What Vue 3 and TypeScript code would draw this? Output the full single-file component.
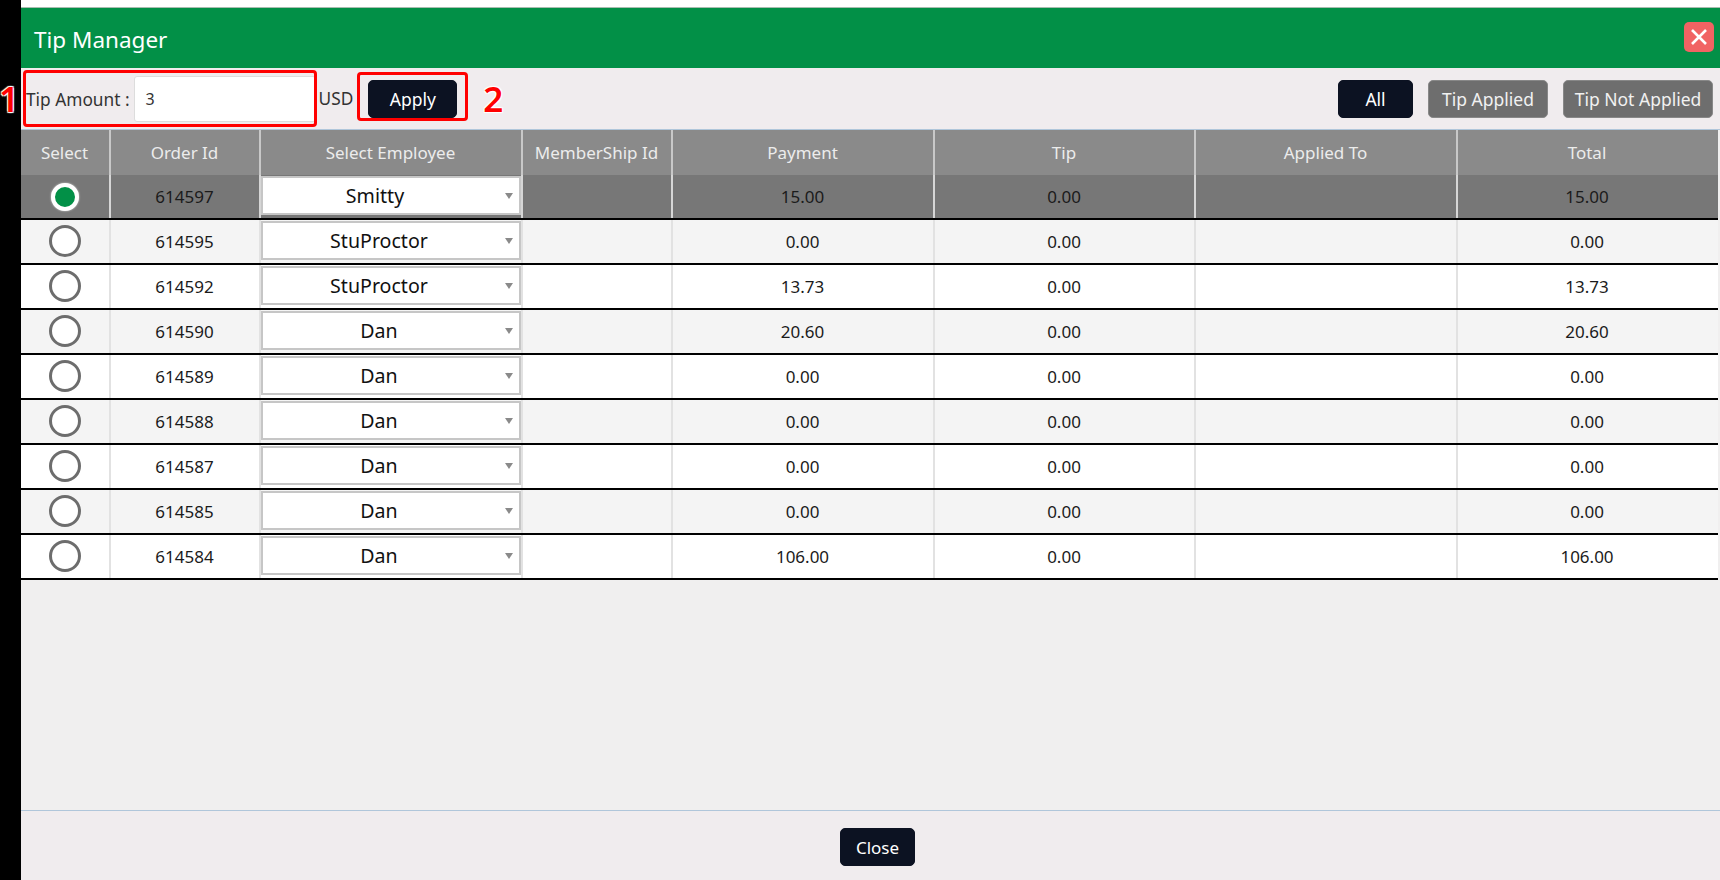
<script setup lang="ts">
interface Row { id: string; emp: string; payment: string; tip: string; total: string }
const rows: Row[] = [
  { id: '614597', emp: 'Smitty', payment: '15.00', tip: '0.00', total: '15.00' },
  { id: '614595', emp: 'StuProctor', payment: '0.00', tip: '0.00', total: '0.00' },
  { id: '614592', emp: 'StuProctor', payment: '13.73', tip: '0.00', total: '13.73' },
  { id: '614590', emp: 'Dan', payment: '20.60', tip: '0.00', total: '20.60' },
  { id: '614589', emp: 'Dan', payment: '0.00', tip: '0.00', total: '0.00' },
  { id: '614588', emp: 'Dan', payment: '0.00', tip: '0.00', total: '0.00' },
  { id: '614587', emp: 'Dan', payment: '0.00', tip: '0.00', total: '0.00' },
  { id: '614585', emp: 'Dan', payment: '0.00', tip: '0.00', total: '0.00' },
  { id: '614584', emp: 'Dan', payment: '106.00', tip: '0.00', total: '106.00' }
]
const heads = ['Select', 'Order Id', 'Select Employee', 'MemberShip Id', 'Payment', 'Tip', 'Applied To', 'Total']
</script>

<template>
  <div class="page">
    <div class="strip"></div>
    <div class="dialog">
      <div class="topgap"></div>
      <header class="title">
        <span>Tip Manager</span>
        <button class="x" aria-label="Close">
          <svg width="18" height="18" viewBox="0 0 18 18"><path d="M2 2L16 16M16 2L2 16" stroke="#fff" stroke-width="2.6" /></svg>
        </button>
      </header>
      <div class="toolbar">
        <div class="amount">
          <label>Tip Amount :</label>
          <div class="input">3</div>
          <i class="mark mark1"></i>
          <b class="num num1">1</b>
        </div>
        <span class="usd">USD</span>
        <div class="applywrap">
          <button class="btn dark">Apply</button>
          <i class="mark mark2"></i>
          <b class="num num2">2</b>
        </div>
        <div class="filters">
          <button class="btn dark all">All</button>
          <button class="btn grey applied">Tip Applied</button>
          <button class="btn grey notapplied">Tip Not Applied</button>
        </div>
      </div>
      <div class="table">
        <div class="tr head">
          <div v-for="h in heads" :key="h" class="td">{{ h }}</div>
        </div>
        <div v-for="(r, i) in rows" :key="r.id" class="tr body" :class="{ sel: i === 0, odd: i % 2 === 1 }">
          <div class="td"><span class="radio" :class="{ on: i === 0 }"></span></div>
          <div class="td">{{ r.id }}</div>
          <div class="td emp">
            <div class="select"><span>{{ r.emp }}</span><i class="caret"></i></div>
          </div>
          <div class="td"></div>
          <div class="td">{{ r.payment }}</div>
          <div class="td">{{ r.tip }}</div>
          <div class="td"></div>
          <div class="td">{{ r.total }}</div>
        </div>
      </div>
      <div class="spacer"></div>
      <footer class="foot"><button class="btn dark">Close</button></footer>
    </div>
  </div>
</template>

<style>
html, body { margin: 0; background: #fff; }
</style>

<style scoped>
.page {
  display: flex;
  width: 1720px;
  height: 880px;
  overflow: hidden;
  font-family: "Noto Sans", "Open Sans", sans-serif;
  color: #1b1b1b;
}
.strip { width: 21px; background: #000; flex: none; }
.dialog { flex: 1; display: flex; flex-direction: column; min-width: 0; background: #f0efef; }
.topgap { height: 7px; background: #fff; border-bottom: 1px solid #a9bdb0; flex: none; }
.title {
  height: 60px;
  flex: none;
  background: #029047;
  color: #fff;
  font-size: 22.5px;
  display: flex;
  align-items: center;
  justify-content: space-between;
  padding: 0 6px 0 13px;
}
.title span { padding-top: 2px; }
.x {
  width: 30px;
  height: 30px;
  margin-top: -2px;
  padding: 0;
  border: 0;
  border-radius: 5px;
  background: #f16363;
  display: flex;
  align-items: center;
  justify-content: center;
}
.toolbar {
  height: 61px;
  flex: none;
  background: #f0ecee;
  border-bottom: 1px solid #b0c6da;
  display: flex;
  align-items: center;
  padding: 0 7px 0 0;
  font-size: 17.3px;
}
.amount { position: relative; display: flex; align-items: center; padding-left: 5px; }
.amount label { color: #333; white-space: nowrap; padding-top: 1px; }
.input {
  width: 182px;
  height: 46px;
  line-height: 44px;
  margin-left: 4px;
  padding-left: 11px;
  box-sizing: border-box;
  background: #fff;
  border: 1px solid #ddd;
  border-radius: 3px;
  color: #333;
  font-size: 16px;
}
.usd { margin-left: 3px; color: #333; }
.applywrap { position: relative; margin-left: 15px; display: flex; }
.btn {
  height: 38px;
  border: 1px solid transparent;
  border-radius: 5px;
  padding: 0;
  font: inherit;
  font-size: 17.5px;
  color: #fff;
}
.dark { background: #0c1222; border-color: #0c1222; }
.grey { background: #6e6e6e; border-color: #888; color: #f1f1f1; }
.applywrap .btn { width: 89px; }
.filters { margin-left: auto; display: flex; gap: 15px; }
.all { width: 75px; }
.applied { width: 120px; }
.notapplied { width: 150px; }
.mark { position: absolute; box-sizing: border-box; border: 3px solid #f00; border-radius: 4px; pointer-events: none; }
.mark1 { left: 2px; top: -6px; width: 294px; height: 57px; }
.mark2 { left: -11px; top: -8px; width: 111px; height: 49px; }
.num {
  position: absolute;
  color: #f00;
  font-weight: 600;
  font-size: 35px;
  line-height: 1;
  text-shadow: 1px 1px 1px #fff, -1px -1px 1px #fff, 1px -1px 1px #fff, -1px 1px 1px #fff;
}
.num1 { left: -22px; top: 5px; }
.num2 { left: 115px; top: 1px; }
.table { flex: none; padding-right: 2px; }
.tr {
  display: grid;
  grid-template-columns: 90px 150px 262px 150px 262px 261px 262px 259px;
}
.head { height: 45px; background: #8a8a8a; color: #ececec; font-size: 17px; }
.head .td { border-right: 2px solid #c8c8c8; }
.body { height: 45px; box-sizing: border-box; background: #fff; border-bottom: 2px solid #000; font-size: 17px; }
.body.odd { background: #f4f4f4; }
.body.sel { background: #777; }
.td {
  display: flex;
  align-items: center;
  justify-content: center;
  border-right: 2px solid #e2e2e2;
  min-width: 0;
  white-space: nowrap;
  box-sizing: border-box;
  padding-right: 1px;
}
.td:last-child { border-right: 0; }
.sel .td { border-right-color: #d6d6d6; }
.radio {
  width: 32px;
  height: 32px;
  margin-bottom: 2px;
  box-sizing: border-box;
  border-radius: 50%;
  border: 3px solid #6d6d6d;
  background: #fff;
}
.radio.on {
  width: 28px;
  height: 28px;
  margin-bottom: 0;
  border: 4px solid #fff;
  background: #029047;
  box-shadow: 0 0 2px #ddd;
}
.td.emp { align-items: flex-start; padding-right: 0; }
.select {
  position: relative;
  width: 100%;
  height: 39px;
  margin-top: 1px;
  box-sizing: border-box;
  border: 2px solid #c6c6c6;
  background: #fff;
  font-size: 19.6px;
  color: #111;
  display: flex;
  align-items: center;
  justify-content: center;
  padding-right: 24px;
}
.sel .select { padding-right: 32px; }
.caret {
  position: absolute;
  right: 6px;
  top: 15px;
  border-left: 4px solid transparent;
  border-right: 4px solid transparent;
  border-top: 6px solid #8a8a8a;
}
.spacer { flex: 1; }
.foot {
  height: 70px;
  flex: none;
  box-sizing: border-box;
  padding: 3px 0 0 14px;
  background: #f0ecee;
  border-top: 1px solid #b0c6da;
  display: flex;
  align-items: center;
  justify-content: center;
}
.foot .btn { width: 75px; font-size: 17px; }
</style>
